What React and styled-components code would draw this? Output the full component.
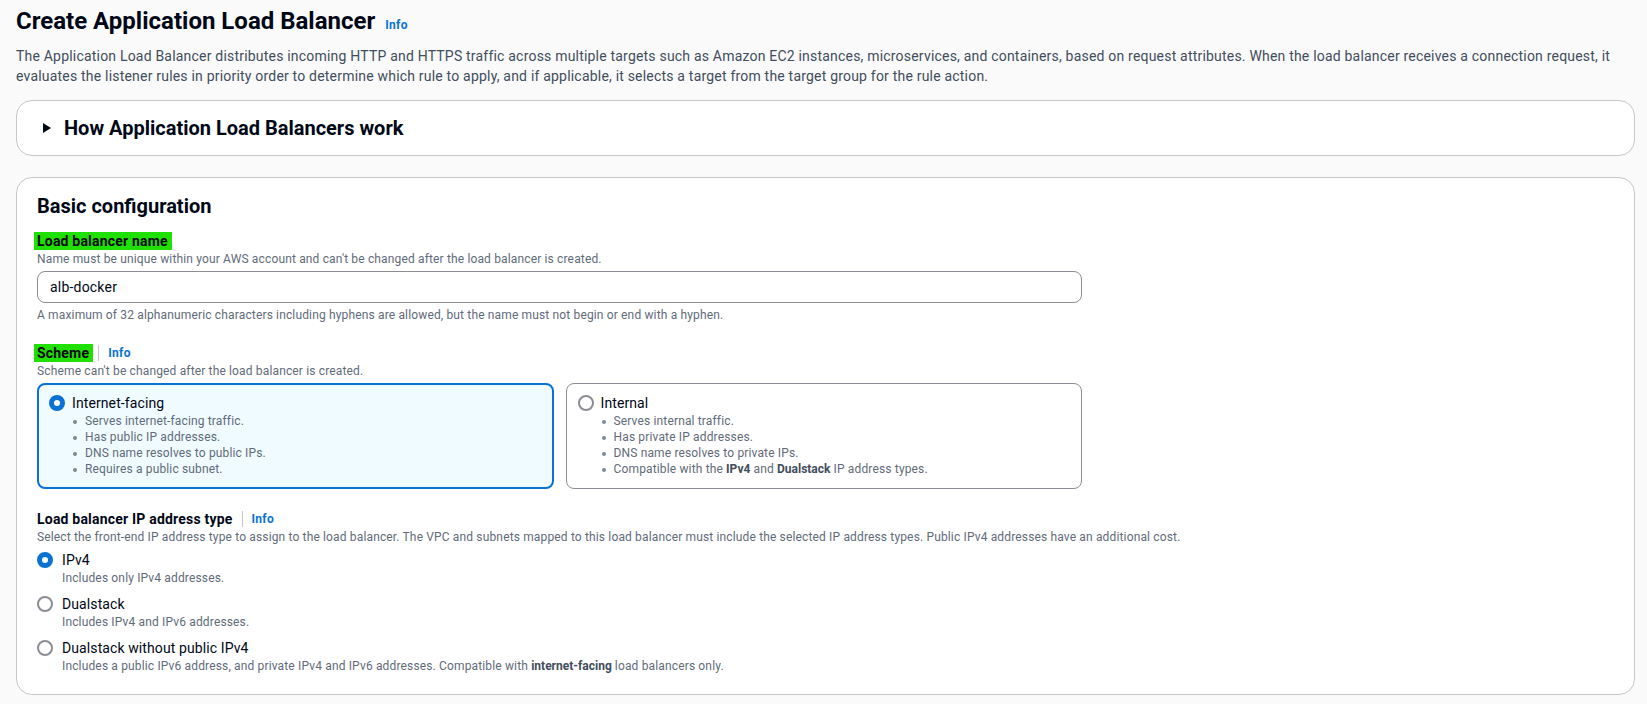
import React, { useState } from "react";
import styled, { createGlobalStyle } from "styled-components";

const GlobalStyle = createGlobalStyle`
  body {
    margin: 0;
    background: #fafafa;
    color: #000716;
    font-family: Roboto, "Liberation Sans", sans-serif;
  }
`;

const Page = styled.main`
  padding: 6px 12px 0 16px;
`;

const Title = styled.h1`
  margin: 0;
  font-size: 24px;
  line-height: 30px;
  font-weight: 700;
`;

const InfoLink = styled.a`
  font-size: 12px;
  font-weight: 700;
  letter-spacing: 0.3px;
  color: #0972d3;
  text-decoration: none;
  margin-left: ${(p) => p.$gap || 0}px;
  cursor: pointer;
`;

const Lead = styled.p`
  margin: 6px 0 14px;
  font-size: 14px;
  line-height: 20px;
  letter-spacing: 0.2px;
  color: #414d5c;
`;

const Card = styled.section`
  background: #fff;
  border: 1px solid #c6c6cd;
  border-radius: 16px;
  padding: ${(p) => p.$pad || "16px 20px 20px"};
  margin-bottom: 21px;

  &:last-child {
    margin-bottom: 0;
  }
`;

const Expander = styled.button`
  display: flex;
  align-items: center;
  gap: 12px;
  padding: 0 0 0 5px;
  border: 0;
  background: none;
  font: inherit;
  font-size: 20px;
  font-weight: 700;
  line-height: 24px;
  color: #000716;
  cursor: pointer;
`;

const Heading = styled.h2`
  margin: 0 0 14px;
  font-size: 20px;
  line-height: 24px;
  font-weight: 700;
`;

const Field = styled.div`
  max-width: ${(p) => (p.$wide ? "none" : "1045px")};
  margin-bottom: ${(p) => (p.$last ? 0 : 21)}px;
`;

const LabelRow = styled.div`
  display: flex;
  align-items: center;
  font-size: 14px;
  font-weight: 700;
  line-height: 18px;
  letter-spacing: 0.2px;
`;

const Marked = styled.span`
  background: #1fe000;
  padding: 0 4px 0 3px;
  margin: 0 -4px 0 -3px;
`;

const Divider = styled.span`
  width: 1px;
  height: 16px;
  background: #c6c6cd;
  margin: 0 9px;
`;

const Hint = styled.div`
  font-size: 12px;
  line-height: 16px;
  letter-spacing: 0.15px;
  color: #5f6b7a;
  margin-top: ${(p) => p.$top || 0}px;

  b {
    font-weight: 700;
    letter-spacing: 0;
    color: #414d5c;
  }
`;

const TextInput = styled.input`
  display: block;
  box-sizing: border-box;
  width: 100%;
  height: 32px;
  margin-top: 4px;
  padding: 0 12px;
  border: 1px solid #8c8c94;
  border-radius: 8px;
  background: #fff;
  font: inherit;
  font-size: 14px;
  letter-spacing: 0.2px;
  color: #000716;
  outline: none;
`;

const SchemeGrid = styled.div`
  display: grid;
  grid-template-columns: 1fr 1fr;
  gap: 12px;
  margin-top: 4px;
`;

const SchemeCard = styled.label`
  display: flex;
  align-items: flex-start;
  gap: 7px;
  border-radius: 8px;
  cursor: pointer;
  border: ${(p) => (p.$selected ? "2px solid #0972d3" : "1px solid #8c8c94")};
  background: ${(p) => (p.$selected ? "#f0fbff" : "#fff")};
  padding: ${(p) => (p.$selected ? "8px 10px 10px" : "9px 11px 11px")};
`;

const RadioDot = styled.span`
  flex: none;
  box-sizing: border-box;
  width: 16px;
  height: 16px;
  margin-top: 2px;
  border-radius: 50%;
  background: #fff;
  border: ${(p) => (p.$checked ? "5px solid #0972d3" : "2px solid #8c8c94")};
`;

const OptionBody = styled.div`
  display: flex;
  flex-direction: column;
`;

const OptionTitle = styled.span`
  font-size: 14px;
  line-height: 20px;
  letter-spacing: 0.1px;
`;

const Bullets = styled.ul`
  margin: 0;
  padding: 0;
  list-style: none;
  font-size: 12px;
  line-height: 16px;
  letter-spacing: 0.15px;
  color: #5f6b7a;

  li {
    position: relative;
    padding-left: 13px;
  }

  li::before {
    content: "";
    position: absolute;
    left: 1px;
    top: 7px;
    width: 4px;
    height: 4px;
    border-radius: 50%;
    background: #7d8998;
  }

  b {
    font-weight: 700;
    letter-spacing: 0;
    color: #414d5c;
  }
`;

const OptionList = styled.div`
  display: flex;
  flex-direction: column;
  gap: 8px;
  margin-top: 5px;
`;

const Option = styled.label`
  display: flex;
  align-items: flex-start;
  gap: 9px;
  cursor: pointer;
`;

const Caret = () => (
  <svg width="10" height="12" viewBox="0 0 10 12">
    <polygon points="1,1 9,6 1,11" fill="#000716" />
  </svg>
);

const schemes = [
  {
    id: "internet-facing",
    title: "Internet-facing",
    points: [
      "Serves internet-facing traffic.",
      "Has public IP addresses.",
      "DNS name resolves to public IPs.",
      "Requires a public subnet.",
    ],
  },
  {
    id: "internal",
    title: "Internal",
    points: [
      "Serves internal traffic.",
      "Has private IP addresses.",
      "DNS name resolves to private IPs.",
      <>
        Compatible with the <b>IPv4</b> and <b>Dualstack</b> IP address types.
      </>,
    ],
  },
];

const ipTypes = [
  { id: "ipv4", title: "IPv4", hint: "Includes only IPv4 addresses." },
  { id: "dualstack", title: "Dualstack", hint: "Includes IPv4 and IPv6 addresses." },
  {
    id: "dualstack-no-v4",
    title: "Dualstack without public IPv4",
    hint: (
      <>
        Includes a public IPv6 address, and private IPv4 and IPv6 addresses. Compatible with{" "}
        <b>internet-facing</b> load balancers only.
      </>
    ),
  },
];

export default function App() {
  const [name, setName] = useState("alb-docker");
  const [scheme, setScheme] = useState("internet-facing");
  const [ipType, setIpType] = useState("ipv4");

  return (
    <Page>
      <GlobalStyle />
      <Title>
        Create Application Load Balancer <InfoLink $gap={4}>Info</InfoLink>
      </Title>
      <Lead>
        The Application Load Balancer distributes incoming HTTP and HTTPS traffic across multiple
        targets such as Amazon EC2 instances, microservices, and containers, based on request
        attributes. When the load balancer receives a connection request, it evaluates the listener
        rules in priority order to determine which rule to apply, and if applicable, it selects a
        target from the target group for the rule action.
      </Lead>

      <Card $pad="15px 20px">
        <Expander type="button">
          <Caret />
          How Application Load Balancers work
        </Expander>
      </Card>

      <Card>
        <Heading>Basic configuration</Heading>

        <Field>
          <LabelRow>
            <Marked>Load balancer name</Marked>
          </LabelRow>
          <Hint $top={1}>
            Name must be unique within your AWS account and can't be changed after the load
            balancer is created.
          </Hint>
          <TextInput value={name} onChange={(e) => setName(e.target.value)} />
          <Hint $top={4}>
            A maximum of 32 alphanumeric characters including hyphens are allowed, but the name
            must not begin or end with a hyphen.
          </Hint>
        </Field>

        <Field>
          <LabelRow>
            <Marked>Scheme</Marked>
            <Divider />
            <InfoLink>Info</InfoLink>
          </LabelRow>
          <Hint $top={1}>Scheme can't be changed after the load balancer is created.</Hint>
          <SchemeGrid>
            {schemes.map((s) => (
              <SchemeCard
                key={s.id}
                $selected={scheme === s.id}
                onClick={() => setScheme(s.id)}
              >
                <RadioDot $checked={scheme === s.id} />
                <OptionBody>
                  <OptionTitle>{s.title}</OptionTitle>
                  <Bullets>
                    {s.points.map((pt, i) => (
                      <li key={i}>{pt}</li>
                    ))}
                  </Bullets>
                </OptionBody>
              </SchemeCard>
            ))}
          </SchemeGrid>
        </Field>

        <Field $wide $last>
          <LabelRow>
            Load balancer IP address type
            <Divider />
            <InfoLink>Info</InfoLink>
          </LabelRow>
          <Hint $top={1}>
            Select the front-end IP address type to assign to the load balancer. The VPC and
            subnets mapped to this load balancer must include the selected IP address types.
            Public IPv4 addresses have an additional cost.
          </Hint>
          <OptionList>
            {ipTypes.map((t) => (
              <Option key={t.id} onClick={() => setIpType(t.id)}>
                <RadioDot $checked={ipType === t.id} />
                <OptionBody>
                  <OptionTitle>{t.title}</OptionTitle>
                  <Hint>{t.hint}</Hint>
                </OptionBody>
              </Option>
            ))}
          </OptionList>
        </Field>
      </Card>
    </Page>
  );
}
